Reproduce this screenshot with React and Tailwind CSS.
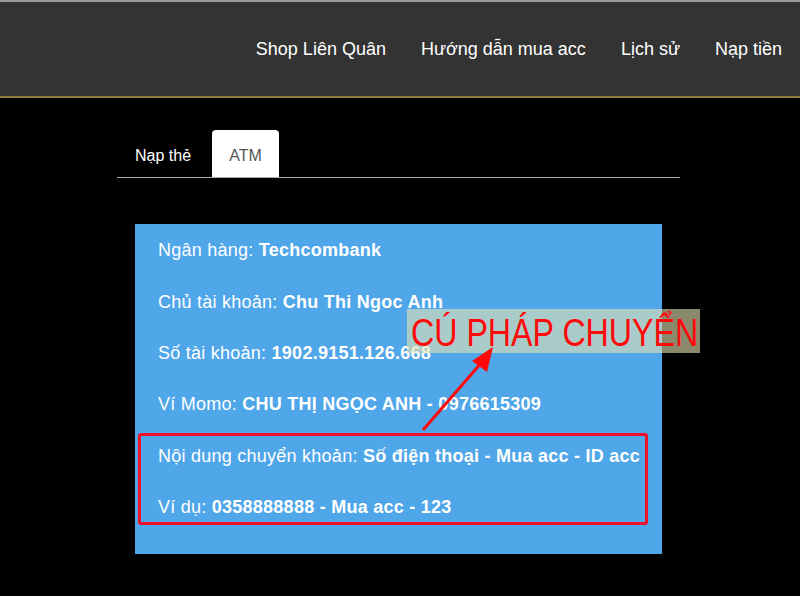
import React, { useState } from "react";

const navItems = ["Shop Liên Quân", "Hướng dẫn mua acc", "Lịch sử", "Nạp tiền"];

const rows = [
  { label: "Ngân hàng:", value: "Techcombank" },
  { label: "Chủ tài khoản:", value: "Chu Thi Ngoc Anh" },
  { label: "Số tài khoản:", value: "1902.9151.126.668" },
  { label: "Ví Momo:", value: "CHU THỊ NGỌC ANH - 0976615309" },
  { label: "Nội dung chuyển khoản:", value: "Số điện thoại - Mua acc - ID acc" },
  { label: "Ví dụ:", value: "0358888888 - Mua acc - 123" },
];

export default function App() {
  const [tab, setTab] = useState("atm");

  return (
    <div
      className="relative w-[800px] h-[596px] bg-black overflow-hidden text-white"
      style={{ fontFamily: '"Liberation Sans", Arial, sans-serif' }}
    >
      <header className="h-[98px] bg-[#333333] border-t-2 border-t-[#9a9a9a] border-b-2 border-b-[#8c7c42] flex items-center justify-end pr-[18px]">
        <nav className="flex gap-[35px] text-[18px]">
          {navItems.map((item) => (
            <a key={item} href="#" className="text-white">
              {item}
            </a>
          ))}
        </nav>
      </header>

      <div className="ml-[117px] w-[563px] mt-[33px]">
        <div className="flex border-b border-[#a8a8a8] h-[47px] items-end">
          <button
            onClick={() => setTab("card")}
            className={`w-[95px] h-[47px] text-[16px] pl-[18px] pt-[4px] text-left rounded-t-[4px] ${
              tab === "card" ? "bg-white text-[#555]" : "text-white"
            }`}
          >
            Nạp thẻ
          </button>
          <button
            onClick={() => setTab("atm")}
            className={`w-[67px] h-[47px] text-[16px] pt-[4px] rounded-t-[4px] ${
              tab === "atm" ? "bg-white text-[#555]" : "text-white"
            }`}
          >
            ATM
          </button>
        </div>

        <div className="mt-[46px] ml-[18px] w-[527px] h-[330px] bg-[#4fa6e9] pl-[23px] pt-[1px] text-[18px] tracking-[0.25px]">
          {rows.map((r) => (
            <div key={r.label} className="h-[51.4px] flex items-center whitespace-nowrap">
              <span>{r.label}&nbsp;</span>
              <b>{r.value}</b>
            </div>
          ))}
        </div>
      </div>

      {/* annotation */}
      <div className="absolute left-[138px] top-[433px] w-[510px] h-[92px] border-[3px] border-[#f0102a] rounded-[3px]" />
      <div className="absolute left-[407px] top-[309px] w-[293px] h-[44px] bg-[rgba(230,228,180,0.6)] flex items-center pl-[4px] overflow-visible">
        <span className="inline-block origin-left scale-x-[0.825] text-[#ff0a0a] text-[39px] leading-none whitespace-nowrap pt-[2px]">
          CÚ PHÁP CHUYỂN
        </span>
      </div>
      <svg className="absolute left-0 top-0" width="800" height="596" viewBox="0 0 800 596">
        <line x1="423" y1="430" x2="482" y2="362" stroke="#ff0a0a" strokeWidth="3" />
        <polygon points="493,347 472,361 487,372" fill="#ff0a0a" />
      </svg>
    </div>
  );
}
